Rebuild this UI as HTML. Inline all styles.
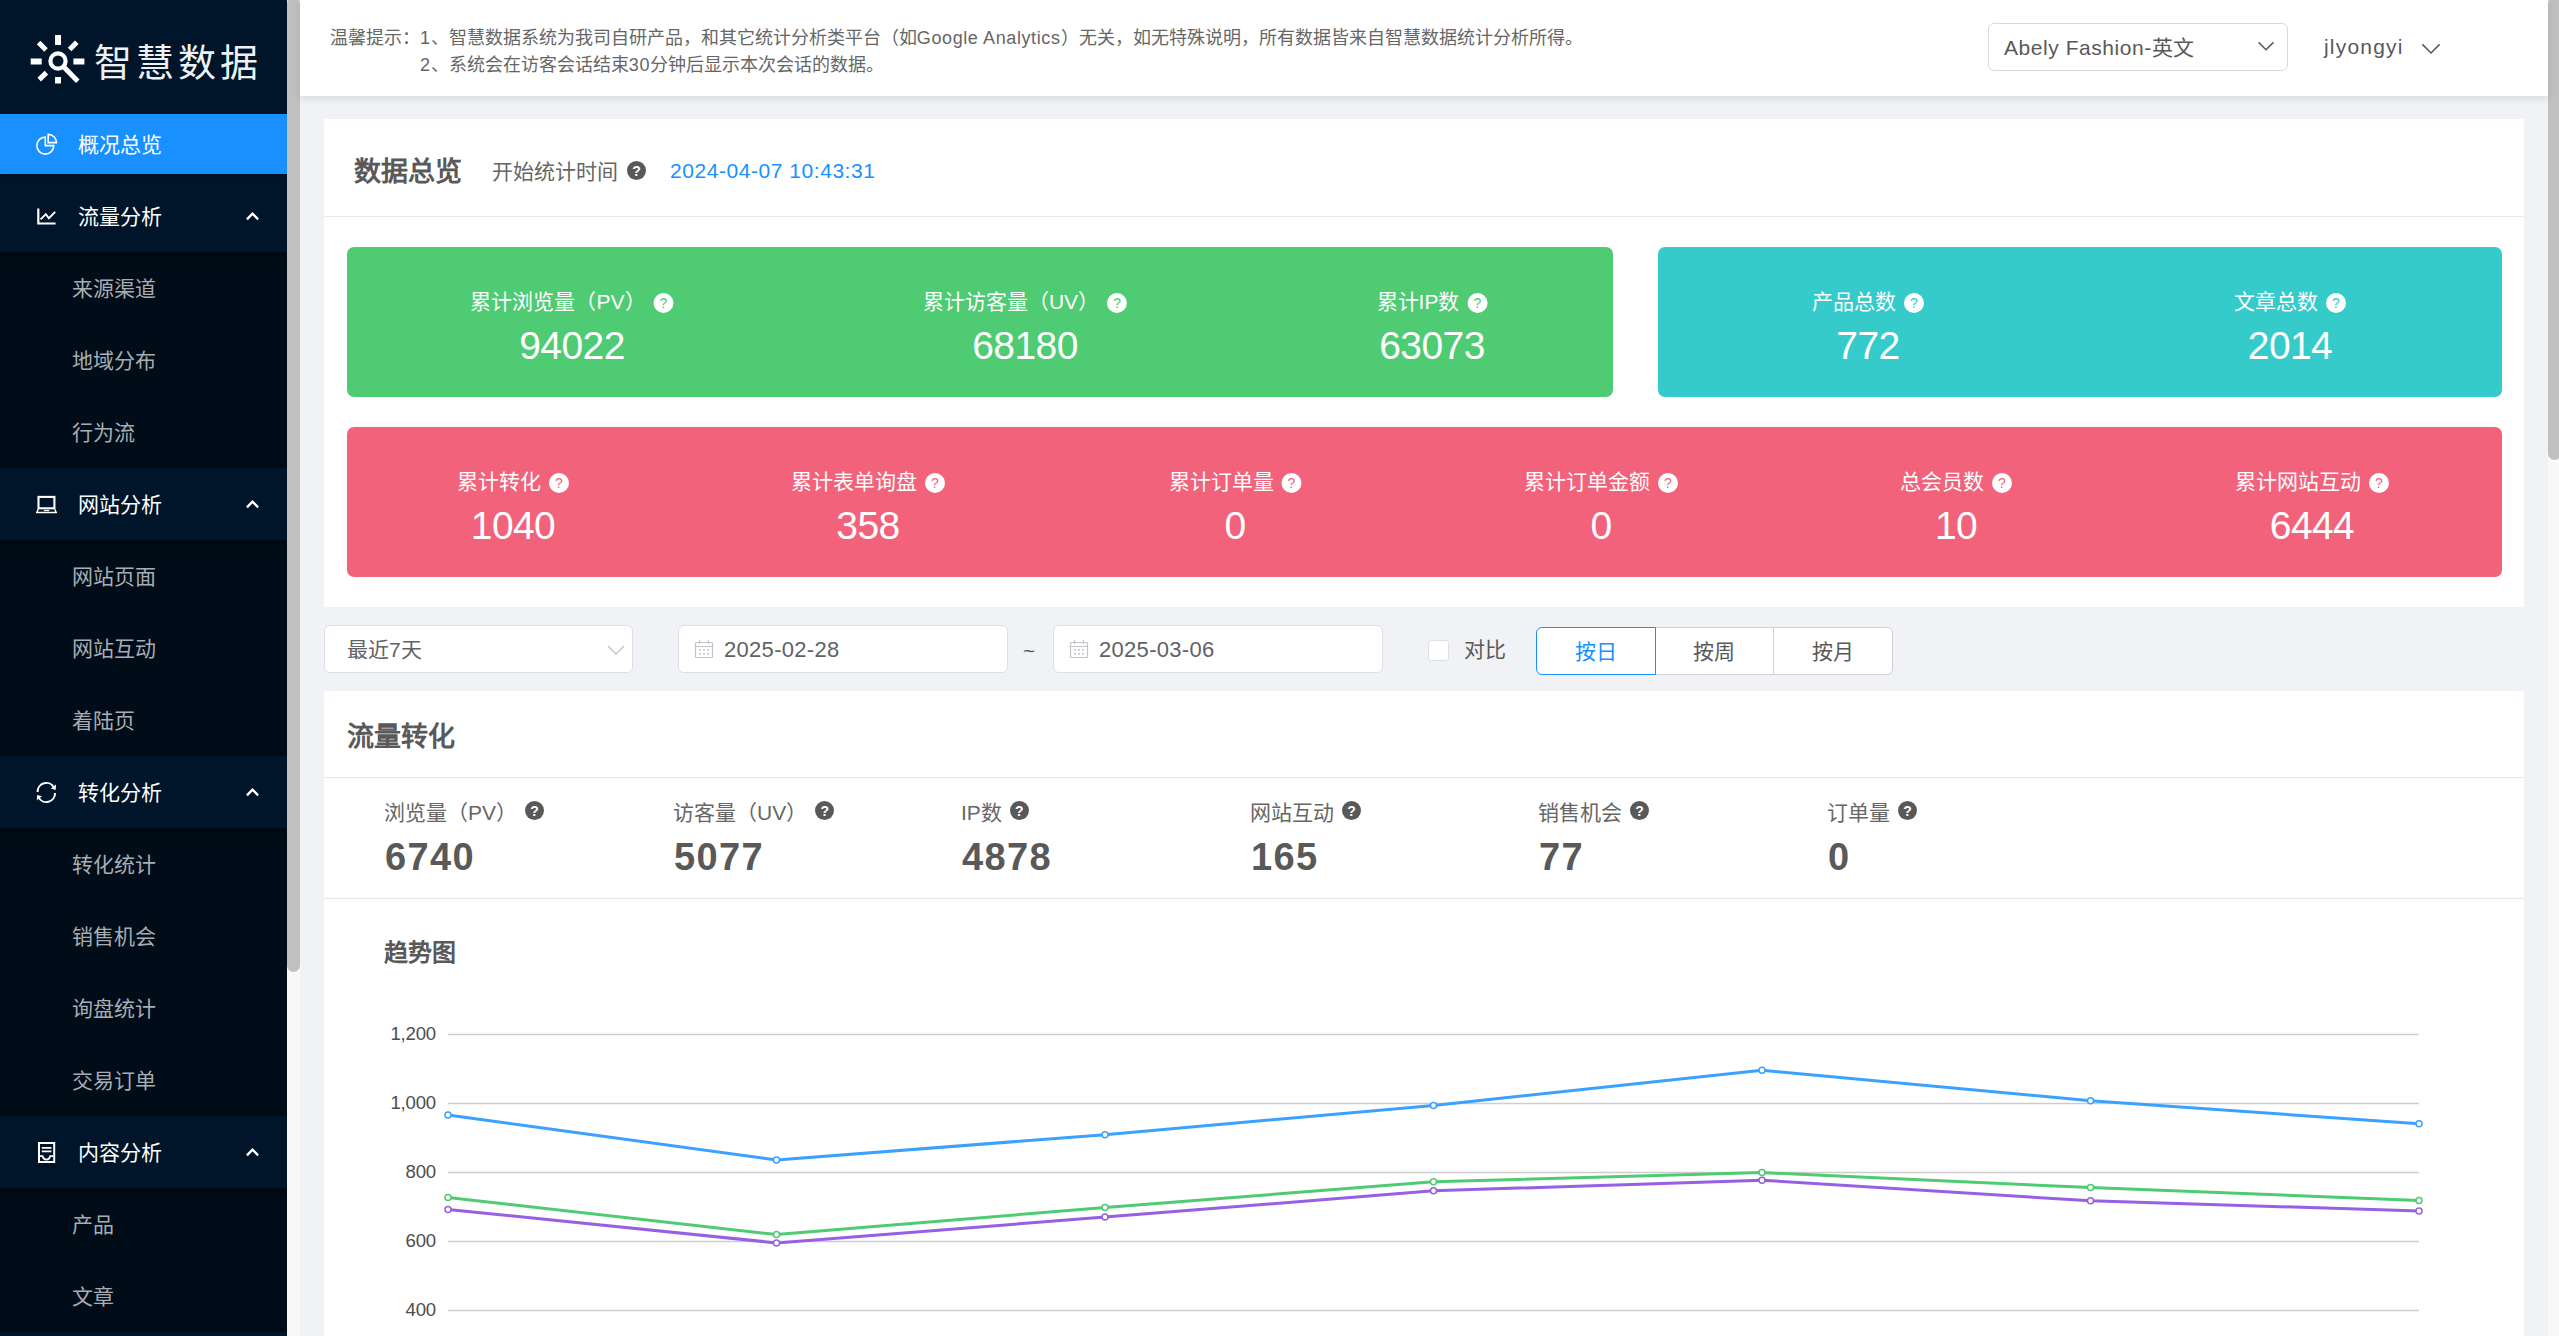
<!DOCTYPE html>
<html lang="zh-CN"><head>
<meta charset="utf-8">
<title>智慧数据 - 概况总览</title>
<style>
*{box-sizing:border-box;margin:0;padding:0}
html,body{width:2559px;height:1336px;overflow:hidden;background:#f0f2f5;font-family:"Liberation Sans",sans-serif;color:#595959}
body{position:relative}
.abs{position:absolute;white-space:nowrap}
/* ---------- sidebar ---------- */
#side{position:absolute;left:0;top:0;width:287px;height:1336px;background:#000c17;overflow:hidden}
#side .logo{position:absolute;left:0;top:0;width:287px;height:114px;background:#001529}
#side .act{position:absolute;left:0;top:114px;width:287px;height:60px;background:#1890ff}
#side .gap{position:absolute;left:0;top:174px;width:287px;height:6px;background:#001529}
#side .hd{position:absolute;left:0;width:287px;height:72px;background:#001529;box-shadow:0 3px 8px rgba(0,0,0,.45)}
#side .hd span,#side .act span{position:absolute;left:78px;top:1px;line-height:72px;font-size:21px;color:#fff;white-space:nowrap}
#side .act span{line-height:60px}
#side .it{position:absolute;left:72px;font-size:21px;line-height:72px;height:72px;padding-top:1px;color:#a6adb4;white-space:nowrap}
#side svg{position:absolute}
/* side scrollbar */
#sbar{position:absolute;left:287px;top:0;width:13px;height:1336px;background:#f8f8f8;overflow:hidden}
#sbar i{position:absolute;left:0;top:-3px;width:13px;height:975px;background:#c1c1c1;border-radius:7px}
#rbar{position:absolute;left:2548px;top:0;width:11px;height:1336px;background:#f8f8f8;overflow:hidden}
#rbar i{position:absolute;left:0;top:-3px;width:13px;height:463px;background:#c1c1c1;border-radius:7px}
/* ---------- header ---------- */
#top{position:absolute;left:300px;top:0;width:2248px;height:96px;background:#fff;box-shadow:0 2px 9px rgba(0,21,41,.12)}
.tip{font-size:18px;line-height:27px;color:#666}
/* ---------- panels ---------- */
.panel{position:absolute;background:#fff}
.line{position:absolute;height:1px;background:#e8e8e8}
.card{position:absolute;border-radius:7px}
.cl{position:absolute;white-space:nowrap;color:#fff;font-size:21px;line-height:30px;transform:translateX(-50%)}
.cn{position:absolute;white-space:nowrap;color:#fff;font-size:39px;line-height:44px;letter-spacing:-0.6px;transform:translateX(-50%)}
.q{display:inline-block;position:relative;top:-4px;width:20px;height:20px;border-radius:50%;background:#fff;vertical-align:-3px;margin-left:8px;font-size:14px;line-height:21px;text-align:center;text-align-last:center;font-weight:normal;font-style:normal}
.qd{display:inline-block;position:relative;top:-2px;width:19px;height:19px;border-radius:50%;background:#595959;color:#fff;vertical-align:2px;margin-left:8px;font-size:14px;line-height:20px;text-align:center;text-align-last:center;font-weight:bold;font-style:normal}
.sl{position:absolute;white-space:nowrap;font-size:21px;line-height:30px;color:#666}
.sn{position:absolute;white-space:nowrap;font-size:38px;line-height:44px;letter-spacing:1.4px;color:#595959;font-weight:bold}
.inp{position:absolute;background:#fff;border:1px solid #dcdfe6;border-radius:6px;height:48px}
.bt{display:inline-block;line-height:inherit;vertical-align:top}
.inp span{position:absolute;top:1px;line-height:46px;font-size:21px;color:#595959;white-space:nowrap}
</style>
</head>
<body>

<!-- ================= SIDEBAR ================= -->
<div id="side">
  <div class="logo"></div>
  <div class="act"><span style="width: 84px; text-align: justify; text-align-last: justify;">概况总览</span></div>
  <div class="gap"></div>

  <div class="it" style="top: 252px; width: 84px; text-align: justify; text-align-last: justify;">来源渠道</div>
  <div class="it" style="top: 324px; width: 84px; text-align: justify; text-align-last: justify;">地域分布</div>
  <div class="it" style="top: 396px; width: 63px; text-align: justify; text-align-last: justify;">行为流</div>
  <div class="it" style="top: 540px; width: 84px; text-align: justify; text-align-last: justify;">网站页面</div>
  <div class="it" style="top: 612px; width: 84px; text-align: justify; text-align-last: justify;">网站互动</div>
  <div class="it" style="top: 684px; width: 63px; text-align: justify; text-align-last: justify;">着陆页</div>
  <div class="it" style="top: 828px; width: 84px; text-align: justify; text-align-last: justify;">转化统计</div>
  <div class="it" style="top: 900px; width: 84px; text-align: justify; text-align-last: justify;">销售机会</div>
  <div class="it" style="top: 972px; width: 84px; text-align: justify; text-align-last: justify;">询盘统计</div>
  <div class="it" style="top: 1044px; width: 84px; text-align: justify; text-align-last: justify;">交易订单</div>
  <div class="it" style="top: 1188px; width: 42px; text-align: justify; text-align-last: justify;">产品</div>
  <div class="it" style="top: 1260px; width: 42px; text-align: justify; text-align-last: justify;">文章</div>

  <div class="hd" style="top:180px"><span style="width: 84px; text-align: justify; text-align-last: justify;">流量分析</span></div>
  <div class="hd" style="top:468px"><span style="width: 84px; text-align: justify; text-align-last: justify;">网站分析</span></div>
  <div class="hd" style="top:756px"><span style="width: 84px; text-align: justify; text-align-last: justify;">转化分析</span></div>
  <div class="hd" style="top:1116px"><span style="width: 84px; text-align: justify; text-align-last: justify;">内容分析</span></div>
  <div class="hd" style="top:1332px"></div>
  <svg width="287" height="1336" viewBox="0 0 287 1336" style="left:0;top:0">
    <!-- logo mark -->
    <g fill="none" stroke="#fff">
      <circle cx="58" cy="61" r="7.6" stroke-width="4.2"></circle>
      <g stroke-width="6">
        <path d="M58 35v10M58 77v6.5M30.7 61.5h11M73.4 61.5h11"></path>
      </g>
      <g stroke-width="5">
        <path d="M38.6 42.6l7.4 7.4M69.6 49.6l7.2-7.4M39.2 79.6l7.2-7"></path>
        <path d="M63.6 66.8l14.2 14.4"></path>
      </g>
    </g>
    <!-- pie chart -->
    <g fill="none" stroke="#fff" stroke-width="1.6">
      <path d="M45.3 137.1A8.5 8.5 0 1 0 53.8 145.6H45.3Z"></path>
      <path d="M48.2 134.4V142.6H56.4A8.2 8.2 0 0 0 48.2 134.4Z"></path>
    </g>
    <!-- line chart -->
    <g fill="none" stroke="#fff" stroke-width="2.2">
      <path d="M38.3 208.4V223.5H55.6"></path>
      <path d="M40.6 219.3L45.8 214.1L48.9 218.2L55.2 211.9" stroke-width="1.9"></path>
    </g>
    <!-- laptop -->
    <g fill="none" stroke="#fff" stroke-width="2.1">
      <rect x="38.5" y="496.9" width="15.9" height="11.4"></rect>
      <path d="M38.2 509.2L36.8 512.4H56.2L54.8 509.2" stroke-width="1.5"></path>
      <path d="M43.8 510.5h5.4" stroke-width="1.3"></path>
    </g>
    <!-- sync -->
    <g fill="none" stroke="#fff" stroke-width="2">
      <path d="M37.6 792A8.7 8.7 0 0 1 54 787.6"></path>
      <path d="M55 793A8.7 8.7 0 0 1 38.6 797.4"></path>
    </g>
    <path d="M56 784.6L55.7 790L50.8 788.6Z" fill="#fff"></path>
    <path d="M36.8 800.2L37.1 794.9L42 796.3Z" fill="#fff"></path>
    <!-- container -->
    <g fill="none" stroke="#fff">
      <rect x="39" y="1143" width="15.2" height="19" stroke-width="2"></rect>
      <path d="M41.8 1147.8h9.6M41.8 1151.4h9.6" stroke-width="1.8"></path>
      <path d="M40 1156.2h2.6c.6 2.4 2 3.4 3.8 3.4s3.2-1 3.8-3.4h3" stroke-width="1.8"></path>
    </g>
    <path d="M246.9 219.3L252.5 213.6L258.1 219.3" fill="none" stroke="#fff" stroke-width="2.4"></path>
    <path d="M246.9 507.3L252.5 501.6L258.1 507.3" fill="none" stroke="#fff" stroke-width="2.4"></path>
    <path d="M246.9 795.3L252.5 789.6L258.1 795.3" fill="none" stroke="#fff" stroke-width="2.4"></path>
    <path d="M246.9 1155.3L252.5 1149.6L258.1 1155.3" fill="none" stroke="#fff" stroke-width="2.4"></path>
  </svg>
  <div class="abs" style="left: 94px; top: 38px; font-size: 38px; line-height: 50px; letter-spacing: 4px; font-weight: 300; color: rgb(238, 241, 244); width: 168px; text-align: justify; text-align-last: justify;">智慧数据</div>
</div>
<div id="sbar"><i></i></div>
<div id="rbar"><i></i></div>

<!-- ================= HEADER ================= -->
<div id="top">
  <div class="abs tip" style="left: 30px; top: 25px; width: 1252.5px; text-align: justify; text-align-last: justify;">温馨提示：<span style="letter-spacing:.8px">1</span>、智慧数据系统为我司自研产品，和其它统计分析类平台（如<span style="letter-spacing:.6px">Google Analytics</span>）无关，如无特殊说明，所有数据皆来自智慧数据统计分析所得。</div>
  <div class="abs tip" style="left: 120px; top: 52px; width: 464.44px; text-align: justify; text-align-last: justify;"><span style="letter-spacing:.8px">2</span>、系统会在访客会话结束<span style="letter-spacing:.8px">30</span>分钟后显示本次会话的数据。</div>
  <div class="abs" style="left:1688px;top:23px;width:300px;height:48px;border:1px solid #d9d9d9;border-radius:6px;background:#fff">
    <span style="position: absolute; left: 15px; top: 0px; line-height: 48px; font-size: 21px; letter-spacing: 0.55px; color: rgb(89, 89, 89); width: 190.88px; text-align: justify; text-align-last: justify;">Abely Fashion-英文</span>
    <svg width="18" height="11" viewBox="0 0 18 11" style="position:absolute;left:268px;top:17px"><path d="M1.6 1.4L9 8.8L16.4 1.4" fill="none" stroke="#595959" stroke-width="1.5"></path></svg>
  </div>
  <div class="abs" style="left:2024px;top:23px;line-height:48px;font-size:21px;letter-spacing:1.2px;color:#595959">jlyongyi</div>
  <svg width="20" height="12" viewBox="0 0 20 12" style="position:absolute;left:2121px;top:43px"><path d="M1.4 1.4L10 10L18.6 1.4" fill="none" stroke="#595959" stroke-width="1.5"></path></svg>
</div>

<!-- ================= PANEL 1 ================= -->
<div class="panel" id="p1" style="left:324px;top:120px;width:2200px;height:487px;box-shadow:0 -1px 0 #fff">
  <div class="abs" style="left: 30px; top: 32px; font-size: 27px; line-height: 40px; font-weight: bold; color: rgb(89, 89, 89); width: 108px; text-align: justify; text-align-last: justify;">数据总览</div>
  <div class="abs" style="left: 168px; top: 37px; font-size: 21px; line-height: 30px; color: rgb(102, 102, 102); width: 154px; text-align: justify; text-align-last: justify;">开始统计时间<i class="qd" style="top:-1px;margin-left:9px">?</i></div>
  <div class="abs" style="left:346px;top:36px;font-size:21px;line-height:30px;letter-spacing:.55px;color:#1890ff">2024-04-07 10:43:31</div>
  <div class="line" style="left:0;top:96px;width:2200px"></div>

  <div class="card" style="left:23px;top:127px;width:1266px;height:150px;background:#4ecb73"></div>
  <div class="card" style="left:1334px;top:127px;width:844px;height:150px;background:#36cbcb"></div>
  <div class="card" style="left:23px;top:307px;width:2155px;height:150px;background:#f2637b"></div>
  <div class="cl" style="left: 248px; top: 167px; width: 203.02px; text-align: justify; text-align-last: justify;">累计浏览量（PV）<i class="q" style="color:#4ecb73">?</i></div>
  <div class="cn" style="left:248px;top:204px">94022</div>
  <div class="cl" style="left: 701px; top: 167px; width: 204.19px; text-align: justify; text-align-last: justify;">累计访客量（UV）<i class="q" style="color:#4ecb73">?</i></div>
  <div class="cn" style="left:701px;top:204px">68180</div>
  <div class="cl" style="left: 1108px; top: 167px; width: 110.85px; text-align: justify; text-align-last: justify;">累计IP数<i class="q" style="color:#4ecb73">?</i></div>
  <div class="cn" style="left:1108px;top:204px">63073</div>
  <div class="cl" style="left: 1544px; top: 167px; width: 112px; text-align: justify; text-align-last: justify;">产品总数<i class="q" style="color:#36cbcb">?</i></div>
  <div class="cn" style="left:1544px;top:204px">772</div>
  <div class="cl" style="left: 1966px; top: 167px; width: 112px; text-align: justify; text-align-last: justify;">文章总数<i class="q" style="color:#36cbcb">?</i></div>
  <div class="cn" style="left:1966px;top:204px">2014</div>
  <div class="cl" style="left: 189px; top: 347px; width: 112px; text-align: justify; text-align-last: justify;">累计转化<i class="q" style="color:#f2637b">?</i></div>
  <div class="cn" style="left:189px;top:384px">1040</div>
  <div class="cl" style="left: 544px; top: 347px; width: 154px; text-align: justify; text-align-last: justify;">累计表单询盘<i class="q" style="color:#f2637b">?</i></div>
  <div class="cn" style="left:544px;top:384px">358</div>
  <div class="cl" style="left: 911px; top: 347px; width: 133px; text-align: justify; text-align-last: justify;">累计订单量<i class="q" style="color:#f2637b">?</i></div>
  <div class="cn" style="left:911px;top:384px">0</div>
  <div class="cl" style="left: 1277px; top: 347px; width: 154px; text-align: justify; text-align-last: justify;">累计订单金额<i class="q" style="color:#f2637b">?</i></div>
  <div class="cn" style="left:1277px;top:384px">0</div>
  <div class="cl" style="left: 1632px; top: 347px; width: 112px; text-align: justify; text-align-last: justify;">总会员数<i class="q" style="color:#f2637b">?</i></div>
  <div class="cn" style="left:1632px;top:384px">10</div>
  <div class="cl" style="left: 1988px; top: 347px; width: 154px; text-align: justify; text-align-last: justify;">累计网站互动<i class="q" style="color:#f2637b">?</i></div>
  <div class="cn" style="left:1988px;top:384px">6444</div>
</div>

<!-- ================= FILTER ROW ================= -->
<div id="filters">
  <div class="inp" style="left:324px;top:625px;width:309px"><span style="left: 22px; color: rgb(96, 98, 102); width: 74.69px; text-align: justify; text-align-last: justify;">最近7天</span>
    <svg width="20" height="12" viewBox="0 0 20 12" style="position:absolute;left:281px;top:18px"><path d="M2 2l8 8 8-8" fill="none" stroke="#c0c4cc" stroke-width="1.4"></path></svg></div>
  <div class="inp" style="left:678px;top:625px;width:330px"><svg class="cal" width="20" height="20" viewBox="0 0 20 20" style="position:absolute;left:15px;top:13px"><g fill="none" stroke="#c0c4cc" stroke-width="1.2"><rect x="1.5" y="3.5" width="17" height="15" rx="1"></rect><path d="M1.5 7.5h17M5.5 1v4M14.5 1v4"></path></g><g fill="#c0c4cc"><rect x="5" y="10" width="2" height="1.5"></rect><rect x="9" y="10" width="2" height="1.5"></rect><rect x="13" y="10" width="2" height="1.5"></rect><rect x="5" y="14" width="2" height="1.5"></rect><rect x="9" y="14" width="2" height="1.5"></rect><rect x="13" y="14" width="2" height="1.5"></rect></g></svg><span style="left:45px;font-size:22px;letter-spacing:.3px;color:#606266">2025-02-28</span></div>
  <div class="abs" style="left:1023px;top:636px;font-size:21px;line-height:30px;color:#595959">~</div>
  <div class="inp" style="left:1053px;top:625px;width:330px"><svg class="cal" width="20" height="20" viewBox="0 0 20 20" style="position:absolute;left:15px;top:13px"><g fill="none" stroke="#c0c4cc" stroke-width="1.2"><rect x="1.5" y="3.5" width="17" height="15" rx="1"></rect><path d="M1.5 7.5h17M5.5 1v4M14.5 1v4"></path></g><g fill="#c0c4cc"><rect x="5" y="10" width="2" height="1.5"></rect><rect x="9" y="10" width="2" height="1.5"></rect><rect x="13" y="10" width="2" height="1.5"></rect><rect x="5" y="14" width="2" height="1.5"></rect><rect x="9" y="14" width="2" height="1.5"></rect><rect x="13" y="14" width="2" height="1.5"></rect></g></svg><span style="left:45px;font-size:22px;letter-spacing:.3px;color:#606266">2025-03-06</span></div>
  <div class="abs" style="left:1428px;top:640px;width:21px;height:21px;background:#fff;border:1px solid #dcdfe6;border-radius:3px"></div>
  <div class="abs" style="left: 1464px; top: 635px; font-size: 21px; line-height: 30px; color: rgb(89, 89, 89); width: 42px; text-align: justify; text-align-last: justify;">对比</div>
  <div class="abs btn" style="left:1655px;top:627px;width:119px;height:48px;border:1px solid #d0d0d0;border-left:0;background:#fff;text-align:center;line-height:48px;font-size:21px;color:#595959"><span class="bt" style="width: 42px; text-align: justify; text-align-last: justify;">按周</span></div>
  <div class="abs btn" style="left:1773px;top:627px;width:120px;height:48px;border:1px solid #d0d0d0;background:#fff;border-radius:0 6px 6px 0;text-align:center;line-height:48px;font-size:21px;color:#595959"><span class="bt" style="width: 42px; text-align: justify; text-align-last: justify;">按月</span></div>
  <div class="abs btn" style="left:1536px;top:627px;width:120px;height:48px;border:1px solid #1890ff;background:#fff;border-radius:6px 0 0 6px;text-align:center;line-height:48px;font-size:21px;color:#1890ff"><span class="bt" style="width: 42px; text-align: justify; text-align-last: justify;">按日</span></div>
</div>

<!-- ================= PANEL 2 ================= -->
<div class="panel" id="p2" style="left:324px;top:691px;width:2200px;height:660px">
  <div class="abs" style="left: 23px; top: 26px; font-size: 27px; line-height: 40px; font-weight: bold; color: rgb(89, 89, 89); width: 108px; text-align: justify; text-align-last: justify;">流量转化</div>
  <div class="line" style="left:0;top:86px;width:2200px"></div>
  <div class="sl" style="left: 60px; top: 107px; width: 160.02px; text-align: justify; text-align-last: justify;">浏览量（PV）<i class="qd">?</i></div>
  <div class="sn" style="left:61px;top:144px">6740</div>
  <div class="sl" style="left: 349px; top: 107px; width: 161.19px; text-align: justify; text-align-last: justify;">访客量（UV）<i class="qd">?</i></div>
  <div class="sn" style="left:350px;top:144px">5077</div>
  <div class="sl" style="left: 637px; top: 107px; width: 67.85px; text-align: justify; text-align-last: justify;">IP数<i class="qd">?</i></div>
  <div class="sn" style="left:638px;top:144px">4878</div>
  <div class="sl" style="left: 926px; top: 107px; width: 111px; text-align: justify; text-align-last: justify;">网站互动<i class="qd">?</i></div>
  <div class="sn" style="left:927px;top:144px">165</div>
  <div class="sl" style="left: 1214px; top: 107px; width: 111px; text-align: justify; text-align-last: justify;">销售机会<i class="qd">?</i></div>
  <div class="sn" style="left:1215px;top:144px">77</div>
  <div class="sl" style="left: 1503px; top: 107px; width: 90px; text-align: justify; text-align-last: justify;">订单量<i class="qd">?</i></div>
  <div class="sn" style="left:1504px;top:144px">0</div>
  <div class="line" style="left:0;top:207px;width:2200px"></div>
  <div class="abs" style="left: 60px; top: 245px; font-size: 24px; line-height: 34px; font-weight: bold; color: rgb(89, 89, 89); width: 72px; text-align: justify; text-align-last: justify;">趋势图</div>
  <svg width="2200" height="660" viewBox="0 0 2200 660" style="position:absolute;left:0;top:0">
  <path d="M124 343.6H2095" stroke="#cdcdcd" stroke-width="1.5"></path>
  <path d="M124 412.6H2095" stroke="#cdcdcd" stroke-width="1.5"></path>
  <path d="M124 481.6H2095" stroke="#cdcdcd" stroke-width="1.5"></path>
  <path d="M124 550.6H2095" stroke="#cdcdcd" stroke-width="1.5"></path>
  <path d="M124 619.6H2095" stroke="#cdcdcd" stroke-width="1.5"></path>
  <polyline points="124.0,424.0 452.5,468.9 781.0,443.7 1109.5,414.4 1438.0,379.3 1766.5,409.8 2095.0,432.7" fill="none" stroke="#3aa1ff" stroke-width="3" stroke-linejoin="round"></polyline>
  <circle cx="124.0" cy="424.0" r="3" fill="#fff" stroke="#3aa1ff" stroke-width="1.5"></circle>
  <circle cx="452.5" cy="468.9" r="3" fill="#fff" stroke="#3aa1ff" stroke-width="1.5"></circle>
  <circle cx="781.0" cy="443.7" r="3" fill="#fff" stroke="#3aa1ff" stroke-width="1.5"></circle>
  <circle cx="1109.5" cy="414.4" r="3" fill="#fff" stroke="#3aa1ff" stroke-width="1.5"></circle>
  <circle cx="1438.0" cy="379.3" r="3" fill="#fff" stroke="#3aa1ff" stroke-width="1.5"></circle>
  <circle cx="1766.5" cy="409.8" r="3" fill="#fff" stroke="#3aa1ff" stroke-width="1.5"></circle>
  <circle cx="2095.0" cy="432.7" r="3" fill="#fff" stroke="#3aa1ff" stroke-width="1.5"></circle>
  <polyline points="124.0,506.4 452.5,543.6 781.0,516.5 1109.5,490.8 1438.0,481.6 1766.5,496.6 2095.0,509.5" fill="none" stroke="#4ecb73" stroke-width="3" stroke-linejoin="round"></polyline>
  <circle cx="124.0" cy="506.4" r="3" fill="#fff" stroke="#4ecb73" stroke-width="1.5"></circle>
  <circle cx="452.5" cy="543.6" r="3" fill="#fff" stroke="#4ecb73" stroke-width="1.5"></circle>
  <circle cx="781.0" cy="516.5" r="3" fill="#fff" stroke="#4ecb73" stroke-width="1.5"></circle>
  <circle cx="1109.5" cy="490.8" r="3" fill="#fff" stroke="#4ecb73" stroke-width="1.5"></circle>
  <circle cx="1438.0" cy="481.6" r="3" fill="#fff" stroke="#4ecb73" stroke-width="1.5"></circle>
  <circle cx="1766.5" cy="496.6" r="3" fill="#fff" stroke="#4ecb73" stroke-width="1.5"></circle>
  <circle cx="2095.0" cy="509.5" r="3" fill="#fff" stroke="#4ecb73" stroke-width="1.5"></circle>
  <polyline points="124.0,518.4 452.5,551.9 781.0,526.1 1109.5,499.8 1438.0,489.2 1766.5,509.8 2095.0,520.0" fill="none" stroke="#975fe4" stroke-width="3" stroke-linejoin="round"></polyline>
  <circle cx="124.0" cy="518.4" r="3" fill="#fff" stroke="#975fe4" stroke-width="1.5"></circle>
  <circle cx="452.5" cy="551.9" r="3" fill="#fff" stroke="#975fe4" stroke-width="1.5"></circle>
  <circle cx="781.0" cy="526.1" r="3" fill="#fff" stroke="#975fe4" stroke-width="1.5"></circle>
  <circle cx="1109.5" cy="499.8" r="3" fill="#fff" stroke="#975fe4" stroke-width="1.5"></circle>
  <circle cx="1438.0" cy="489.2" r="3" fill="#fff" stroke="#975fe4" stroke-width="1.5"></circle>
  <circle cx="1766.5" cy="509.8" r="3" fill="#fff" stroke="#975fe4" stroke-width="1.5"></circle>
  <circle cx="2095.0" cy="520.0" r="3" fill="#fff" stroke="#975fe4" stroke-width="1.5"></circle>
  </svg>
  <div class="abs yl" style="left:0;width:112px;text-align:right;letter-spacing:-.2px;top:329px;font-size:18.6px;line-height:27px;color:#4d4d4d">1,200</div>
  <div class="abs yl" style="left:0;width:112px;text-align:right;letter-spacing:-.2px;top:398px;font-size:18.6px;line-height:27px;color:#4d4d4d">1,000</div>
  <div class="abs yl" style="left:0;width:112px;text-align:right;letter-spacing:-.2px;top:467px;font-size:18.6px;line-height:27px;color:#4d4d4d">800</div>
  <div class="abs yl" style="left:0;width:112px;text-align:right;letter-spacing:-.2px;top:536px;font-size:18.6px;line-height:27px;color:#4d4d4d">600</div>
  <div class="abs yl" style="left:0;width:112px;text-align:right;letter-spacing:-.2px;top:605px;font-size:18.6px;line-height:27px;color:#4d4d4d">400</div>
</div>



</body></html>
